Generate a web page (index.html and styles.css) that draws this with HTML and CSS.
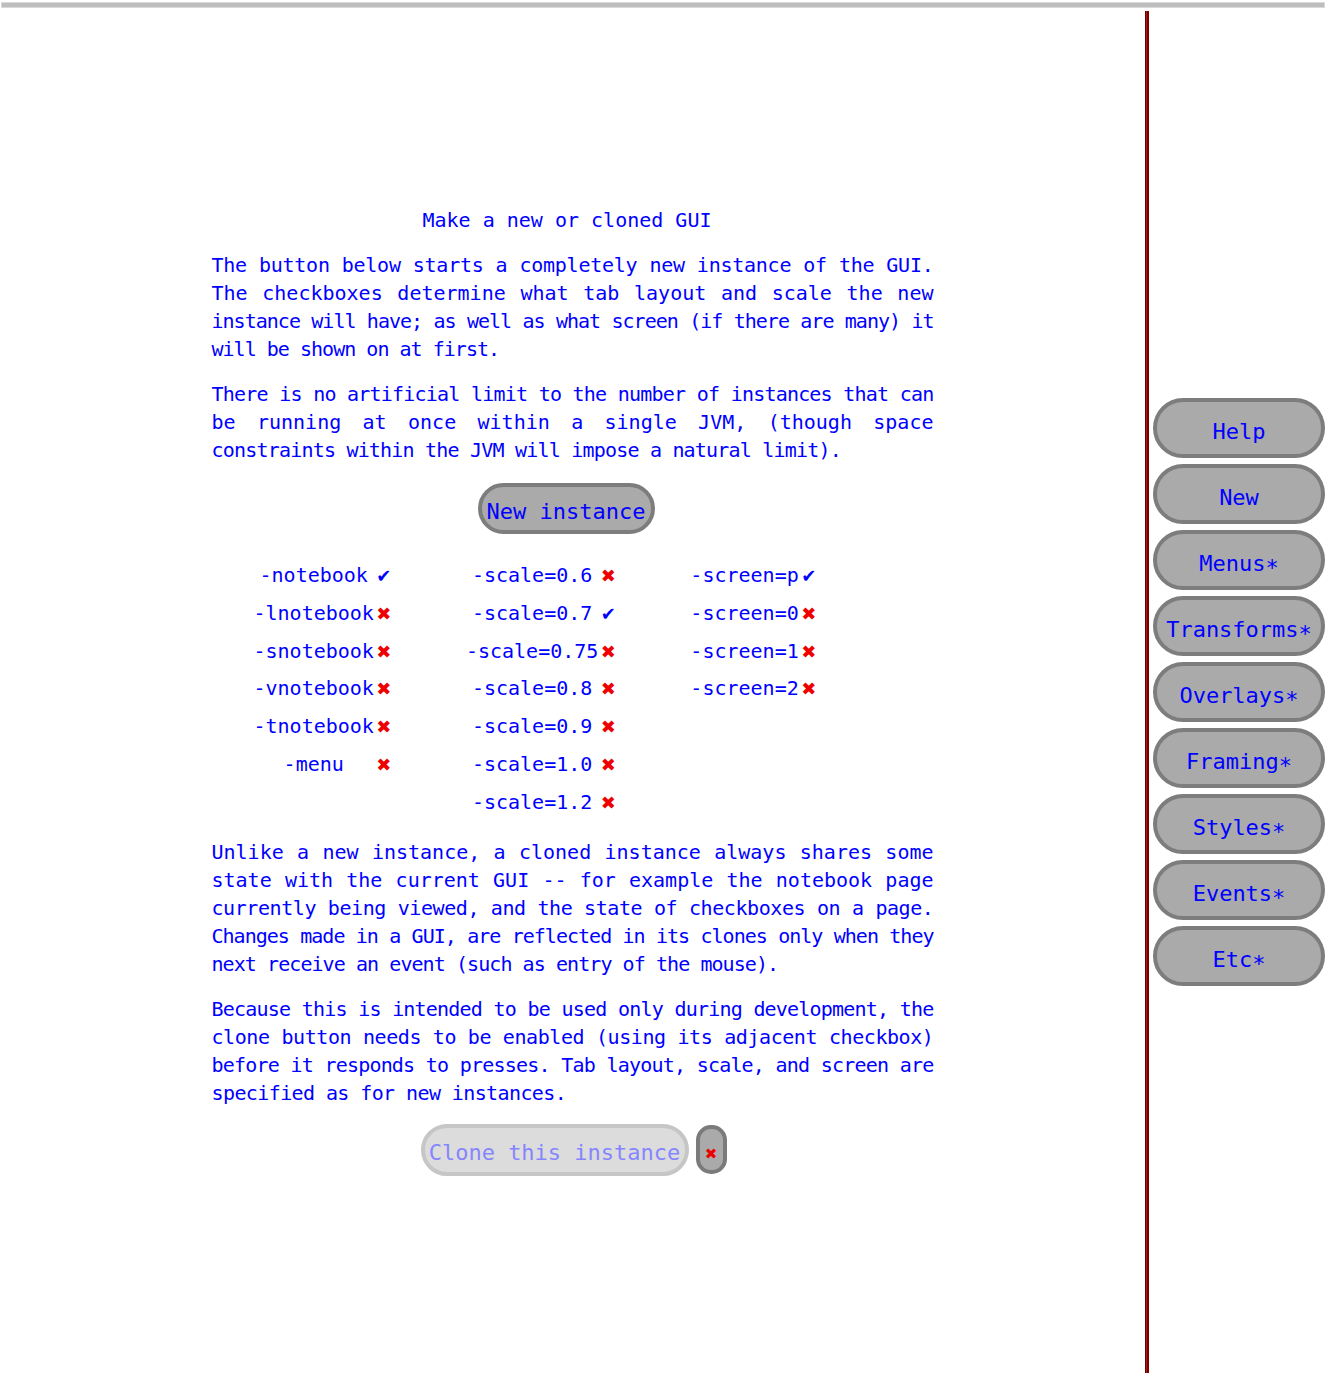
FILE: index.html
```html
<!DOCTYPE html>
<html>
<head>
<meta charset="utf-8">
<title>Make a new or cloned GUI</title>
<link rel="stylesheet" href="styles.css">
</head>
<body>
<div class="topbar"></div>
<div class="layout">
  <main class="main">
    <div class="column">
      <div class="title">Make a new or cloned GUI</div>

      <div class="para">
        <div class="ln t2">The button below starts a completely new instance of the GUI.</div>
        <div class="ln">The checkboxes determine what tab layout and scale the new</div>
        <div class="ln t10">instance will have; as well as what screen (if there are many) it</div>
        <div class="ln last t10">will be shown on at first.</div>
      </div>

      <div class="para">
        <div class="ln t8">There is no artificial limit to the number of instances that can</div>
        <div class="ln">be running at once within a single JVM, (though space</div>
        <div class="ln last t8">constraints within the JVM will impose a natural limit).</div>
      </div>

      <div class="new-row"><button class="pill new">New instance</button></div>

      <div class="options">
        <div class="opt-col">
          <div class="opt"><span class="lbl w10">-notebook</span><span class="mark on">✔</span></div>
          <div class="opt"><span class="lbl w10">-lnotebook</span><span class="mark off">✖</span></div>
          <div class="opt"><span class="lbl w10">-snotebook</span><span class="mark off">✖</span></div>
          <div class="opt"><span class="lbl w10">-vnotebook</span><span class="mark off">✖</span></div>
          <div class="opt"><span class="lbl w10">-tnotebook</span><span class="mark off">✖</span></div>
          <div class="opt"><span class="lbl w10">-menu</span><span class="mark off">✖</span></div>
        </div>
        <div class="opt-col">
          <div class="opt"><span class="lbl w11">-scale=0.6</span><span class="mark off">✖</span></div>
          <div class="opt"><span class="lbl w11">-scale=0.7</span><span class="mark on">✔</span></div>
          <div class="opt"><span class="lbl w11">-scale=0.75</span><span class="mark off">✖</span></div>
          <div class="opt"><span class="lbl w11">-scale=0.8</span><span class="mark off">✖</span></div>
          <div class="opt"><span class="lbl w11">-scale=0.9</span><span class="mark off">✖</span></div>
          <div class="opt"><span class="lbl w11">-scale=1.0</span><span class="mark off">✖</span></div>
          <div class="opt"><span class="lbl w11">-scale=1.2</span><span class="mark off">✖</span></div>
        </div>
        <div class="opt-col">
          <div class="opt"><span class="lbl w9">-screen=p</span><span class="mark on">✔</span></div>
          <div class="opt"><span class="lbl w9">-screen=0</span><span class="mark off">✖</span></div>
          <div class="opt"><span class="lbl w9">-screen=1</span><span class="mark off">✖</span></div>
          <div class="opt"><span class="lbl w9">-screen=2</span><span class="mark off">✖</span></div>
        </div>
      </div>

      <div class="para p3">
        <div class="ln">Unlike a new instance, a cloned instance always shares some</div>
        <div class="ln">state with the current GUI -- for example the notebook page</div>
        <div class="ln t4">currently being viewed, and the state of checkboxes on a page.</div>
        <div class="ln t10">Changes made in a GUI, are reflected in its clones only when they</div>
        <div class="ln last t9">next receive an event (such as entry of the mouse).</div>
      </div>

      <div class="para">
        <div class="ln t8">Because this is intended to be used only during development, the</div>
        <div class="ln t4">clone button needs to be enabled (using its adjacent checkbox)</div>
        <div class="ln t8">before it responds to presses. Tab layout, scale, and screen are</div>
        <div class="ln last t6">specified as for new instances.</div>
      </div>

      <div class="clone-row">
        <button class="pill clone">Clone this instance</button>
        <button class="toggle">✖</button>
      </div>
    </div>
  </main>
  <div class="divider"></div>
  <nav class="sidebar">
    <button class="pill side">Help</button>
    <button class="pill side">New</button>
    <button class="pill side">Menus∗</button>
    <button class="pill side">Transforms∗</button>
    <button class="pill side">Overlays∗</button>
    <button class="pill side">Framing∗</button>
    <button class="pill side">Styles∗</button>
    <button class="pill side">Events∗</button>
    <button class="pill side">Etc∗</button>
  </nav>
</div>
</body>
</html>
```
FILE: styles.css
```css
html, body {
  margin: 0;
  padding: 0;
  background: #ffffff;
}

body {
  font-family: "DejaVu Sans Mono", "Liberation Mono", monospace;
  font-size: 20px;
  color: #0000ff;
  overflow: hidden;
}

.topbar {
  margin: 2px 2px 0 1px;
  height: 4px;
  border: 1px solid #dadada;
  background: #bdbdbd;
}

.layout {
  margin-top: 3px;
  height: 1362px;
  display: flex;
}

.main {
  width: 1145px;
  display: flex;
  justify-content: center;
  padding-top: 195px;
  box-sizing: border-box;
}

.column {
  width: 722px;
  display: flex;
  flex-direction: column;
}

.title {
  height: 28px;
  line-height: 28px;
  text-align: center;
  padding-right: 12px;
  padding-left: 1px;
  white-space: pre;
}

.para {
  margin-top: 17px;
}

.para.p3 {
  margin-top: 16px;
}

.ln {
  height: 28px;
  line-height: 28px;
  text-align: justify;
  text-align-last: justify;
}

.ln.last {
  text-align: left;
  text-align-last: left;
}

.t2 { letter-spacing: -0.25px; }
.t4 { letter-spacing: -0.42px; }
.t6 { letter-spacing: -0.6px; }
.t8 { letter-spacing: -0.8px; }
.t9 { letter-spacing: -0.93px; }
.t10 { letter-spacing: -0.98px; }

.pill {
  box-sizing: border-box;
  font-family: "DejaVu Sans Mono", "Liberation Mono", monospace;
  font-size: 22px;
  color: #0000ff;
  background: #aaaaaa;
  border: 4px solid #7d7d7d;
  border-radius: 999px;
  display: flex;
  align-items: center;
  justify-content: center;
  padding: 6px 0 0 0;
  margin: 0;
  white-space: pre;
  cursor: pointer;
}

.new-row {
  margin-top: 19px;
  display: flex;
  justify-content: center;
  padding-right: 13px;
}

.pill.new {
  width: 177px;
  height: 51px;
  padding-top: 5px;
}

.options {
  margin-top: 23px;
  padding-left: 42px;
  display: flex;
  gap: 74px;
  align-items: flex-start;
}

.opt {
  height: 37.8px;
  line-height: 37.8px;
  white-space: pre;
}

.lbl {
  display: inline-block;
  text-align: center;
}

.w9 { width: 9ch; }
.w10 { width: 10ch; }
.w11 { width: 11ch; }

.mark {
  display: inline-block;
  width: 16px;
  margin-left: 2px;
  text-align: center;
  font-family: "DejaVu Sans", sans-serif;
  font-size: 18px;
}

.mark.on { color: #0000ff; }
.mark.off { color: #ee0000; }

.clone-row {
  margin-top: 17px;
  display: flex;
  justify-content: center;
  align-items: center;
  gap: 7px;
  padding-left: 2px;
}

.pill.clone {
  width: 268px;
  height: 52px;
  background: #dcdcdc;
  border-color: #c6c6c6;
  color: #8585ff;
}

.toggle {
  box-sizing: border-box;
  width: 31px;
  height: 49px;
  border: 4px solid #7b7b7b;
  border-radius: 15px;
  background: #aaaaaa;
  color: #ee0000;
  font-family: "DejaVu Sans", sans-serif;
  font-size: 15px;
  padding: 8px 0 0 0;
  margin: 0;
  display: flex;
  align-items: center;
  justify-content: center;
}

.divider {
  width: 4px;
  flex: none;
  background: linear-gradient(to right, #6a0000 0, #6a0000 1px, #a51a1a 1px, #a51a1a 2px, #7a0000 2px, #7a0000 4px);
}

.sidebar {
  width: 178px;
  flex: none;
  box-sizing: border-box;
  padding-left: 4px;
  display: flex;
  flex-direction: column;
  justify-content: center;
  gap: 6px;
}

.pill.side {
  width: 172px;
  height: 60px;
}
```
